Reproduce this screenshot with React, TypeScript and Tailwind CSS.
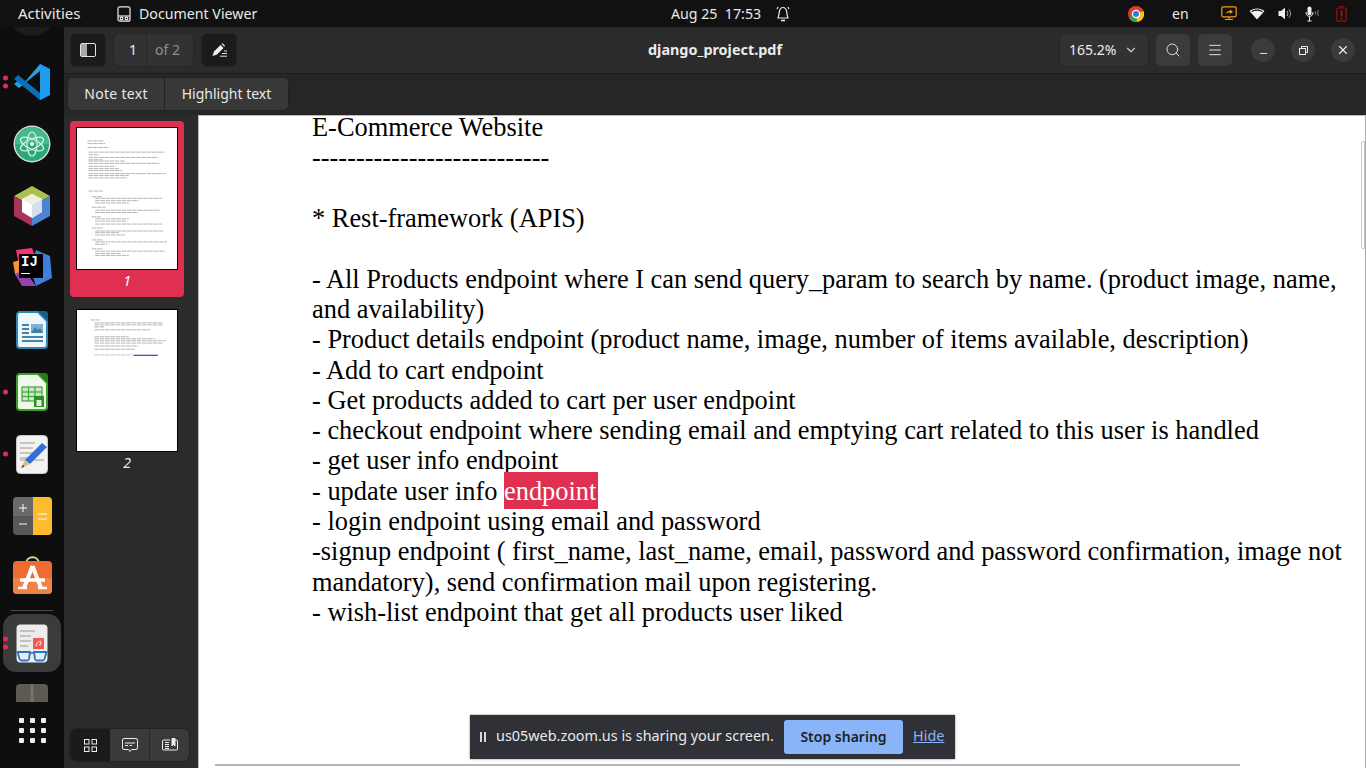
import { ChevronDown, Menu, Minus, Search, X } from "lucide-react";
import type { ReactNode } from "react";

const UI_FONT = "font-['Noto_Sans',sans-serif]";

// [y, x1, x2] in zoomed thumbnail coordinates
const PAGE_ONE: number[][] = [
  [70, 65, 115], [78, 65, 118], [90, 65, 130], [104, 68, 298], [112, 68, 100], [120, 68, 278],
  [127, 68, 110], [131, 68, 180], [138, 68, 282], [147, 68, 150], [154, 68, 160], [160, 68, 170],
  [169, 68, 302], [175, 68, 190], [182, 68, 185], [222, 68, 112], [239, 78, 108], [244, 88, 290],
  [251, 88, 220], [258, 88, 190], [271, 78, 120], [280, 88, 285], [287, 88, 218], [300, 78, 105],
  [306, 88, 190], [313, 88, 185], [322, 88, 290], [334, 78, 112], [343, 88, 295], [348, 88, 160],
  [355, 88, 178], [370, 78, 112], [376, 88, 305], [383, 88, 125], [397, 78, 112], [404, 88, 300],
  [411, 88, 165], [417, 88, 190],
];

const PAGE_TWO: number[][] = [
  [61, 75, 102], [70, 86, 292], [76, 86, 292], [82, 86, 115], [91, 86, 255], [112, 86, 190],
  [118, 86, 268], [124, 86, 302], [131, 86, 292], [140, 86, 218], [150, 86, 208],
];

function Thumb({ lines, link }: { lines: number[][]; link?: boolean }) {
  return (
    <div className="h-[143px] w-[102px] border border-black bg-white">
      <svg viewBox="33 33 303 423" className="h-full w-full">
        {lines.map(([y, a, b]) => (
          <line key={y} x1={a} x2={b} y1={y} y2={y} stroke="#b4b4b4" strokeWidth="3" strokeDasharray="14 2" />
        ))}
        {link && <line x1="86" x2="204" y1="167" y2="167" stroke="#c4c4c4" strokeWidth="3" strokeDasharray="14 2" />}
        {link && <line x1="205" x2="278" y1="168" y2="168" stroke="#1b1b8f" strokeWidth="3" />}
      </svg>
    </div>
  );
}

function DockItem({ children, dots = 0, active = false }: { children: ReactNode; dots?: number; active?: boolean }) {
  return (
    <div className="relative flex h-[62px] w-full items-center justify-center">
      {active && <div className="absolute left-[3px] top-0 h-[58px] w-[58px] translate-y-[2px] rounded-[13px] bg-[#3b3b3b]" />}
      {dots > 0 && (
        <div className="absolute left-[3px] top-1/2 flex -translate-y-1/2 flex-col gap-[3px]">
          {Array.from({ length: dots }).map((_, i) => (
            <span key={i} className="h-[5px] w-[5px] rounded-full bg-[#df3052]" />
          ))}
        </div>
      )}
      <div className="relative flex">{children}</div>
    </div>
  );
}

function VsCode() {
  return (
    <svg width="38" height="38" viewBox="0 0 38 38">
      <path d="M27 1 L37 6 V32 L27 37 L10 21 L27 30 V8 Z" fill="#0f7fc8" />
      <path d="M27 1 L37 6 V32 L27 37 Z" fill="#1f9cf0" />
      <path d="M27 8 L6 25 L1 21 L6 17 L11 20 L27 1 Z" fill="#2a9fe6" />
      <path d="M1 16 L5 12 L27 30 V37 Z" fill="#0a6fb5" />
    </svg>
  );
}

function Atom() {
  return (
    <svg width="38" height="38" viewBox="0 0 38 38">
      <circle cx="19" cy="19" r="18.5" fill="#d5ddd8" />
      <circle cx="19" cy="19" r="17" fill="#2aa876" />
      <path d="M2 19 A17 17 0 0 1 36 19 Z" fill="#45b88c" />
      <g fill="none" stroke="#d9f2e6" strokeWidth="1.2">
        <ellipse cx="19" cy="19" rx="12.5" ry="5" transform="rotate(25 19 19)" />
        <ellipse cx="19" cy="19" rx="12.5" ry="5" transform="rotate(-25 19 19)" />
        <ellipse cx="19" cy="19" rx="5" ry="12" />
      </g>
      <circle cx="19" cy="19" r="2" fill="#e5f7ee" />
    </svg>
  );
}

function NetBeans() {
  return (
    <svg width="38" height="42" viewBox="0 0 38 42">
      <path d="M19 1 L37 11 L19 21 L1 11 Z" fill="#a9c24f" />
      <path d="M1 11 L19 21 V41 L1 31 Z" fill="#a7345a" />
      <path d="M37 11 L19 21 V41 L37 31 Z" fill="#4a84d2" />
      <path d="M19 9 L29 14 V27 L19 33 L9 27 V14 Z" fill="#ffffff" />
      <path d="M19 9 L29 14 L19 20 L9 14 Z" fill="#eef1e0" />
      <path d="M29 14 V27 L19 33 V20 Z" fill="#d5dfeb" />
    </svg>
  );
}

function IntelliJ() {
  return (
    <div className="relative h-[40px] w-[40px]">
      <svg width="40" height="40" viewBox="0 0 40 40" className="absolute left-0 top-0">
        <path d="M4 2 L20 0 L24 10 L8 22 Z" fill="#f5336f" />
        <path d="M24 2 L38 8 L40 30 L24 38 L18 20 Z" fill="#3d7fd9" />
        <path d="M1 14 L8 12 L9 30 L3 26 Z" fill="#f59331" />
        <path d="M3 26 L10 38 L24 38 L12 22 Z" fill="#9243ac" />
      </svg>
      <div className="absolute left-[7px] top-[6px] flex h-[24px] w-[24px] flex-col bg-black pl-[2px]">
        <span className="font-['Liberation_Mono',monospace] text-[14px] font-bold leading-[16px] text-white">IJ</span>
        <span className="mt-[3px] h-[1px] w-[9px] bg-white" />
      </div>
    </div>
  );
}

function Writer() {
  return (
    <svg width="32" height="38" viewBox="0 0 32 38">
      <path d="M3 1 H22 L31 10 V34 A3 3 0 0 1 28 37 H4 A3 3 0 0 1 1 34 V3 Z" fill="#eef7fb" stroke="#2d86b8" strokeWidth="2" />
      <path d="M22 0 H29 A3 3 0 0 1 32 3 V10 Z" fill="#185f86" />
      <g stroke="#24658f" strokeWidth="1.6">
        <line x1="6" x2="13" y1="14" y2="14" />
        <line x1="6" x2="13" y1="18" y2="18" />
        <line x1="6" x2="13" y1="22" y2="22" />
        <line x1="6" x2="27" y1="26" y2="26" />
        <line x1="6" x2="27" y1="30" y2="30" />
      </g>
      <rect x="15" y="13" width="12" height="9" fill="#7fb2d4" />
      <path d="M15 22 L19 16 L22 19 L24 17 L27 22 Z" fill="#3f7ea8" />
    </svg>
  );
}

function CalcDoc() {
  return (
    <svg width="32" height="38" viewBox="0 0 32 38">
      <path d="M3 1 H22 L31 10 V34 A3 3 0 0 1 28 37 H4 A3 3 0 0 1 1 34 V3 Z" fill="#f1f8ec" stroke="#3aa02a" strokeWidth="2" />
      <path d="M22 0 H29 A3 3 0 0 1 32 3 V10 Z" fill="#257a1a" />
      <g stroke="#43a53a" strokeWidth="1.2" fill="#cfe9c7">
        <rect x="6" y="14" width="20" height="14" />
        <line x1="6" x2="26" y1="19" y2="19" />
        <line x1="6" x2="26" y1="23.5" y2="23.5" />
        <line x1="12.5" x2="12.5" y1="14" y2="28" />
        <line x1="19" x2="19" y1="14" y2="28" />
      </g>
      <rect x="18" y="23" width="10" height="11" fill="#2f8f25" />
      <rect x="20.5" y="27" width="5" height="6" fill="#dff0d8" />
    </svg>
  );
}

function TextEditor() {
  return (
    <svg width="32" height="39" viewBox="0 0 32 39">
      <rect x="0.5" y="0.5" width="31" height="38" rx="4" fill="#f2f2f2" stroke="#c9c9c9" />
      <g stroke="#bdbab0" strokeWidth="1.6">
        <line x1="4" x2="19" y1="8" y2="8" />
        <line x1="4" x2="17" y1="13" y2="13" />
        <line x1="4" x2="17" y1="18" y2="18" />
        <line x1="4" x2="13" y1="23" y2="23" />
        <line x1="4" x2="28" y1="25" y2="25" />
      </g>
      <path d="M26 8 L31 12 L14 29 L9 25 Z" fill="#2f6fd6" />
      <path d="M9 25 L14 29 L5 33 Z" fill="#e9b77d" />
      <path d="M7 30 L8.5 31.5 L5 33 Z" fill="#333" />
    </svg>
  );
}

function Calculator() {
  return (
    <svg width="39" height="38" viewBox="0 0 39 38">
      <path d="M4 0 H20 V19 H0 V4 A4 4 0 0 1 4 0 Z" fill="#6a6a6a" />
      <path d="M0 19 H20 V38 H4 A4 4 0 0 1 0 34 Z" fill="#585858" />
      <path d="M20 0 H35 A4 4 0 0 1 39 4 V34 A4 4 0 0 1 35 38 H20 Z" fill="#fdbb2d" />
      <g stroke="#f0f0f0" strokeWidth="1.1">
        <line x1="6" x2="14" y1="11" y2="11" />
        <line x1="10" x2="10" y1="7" y2="15" />
        <line x1="6" x2="14" y1="27" y2="27" />
      </g>
      <g stroke="#fff2c9" strokeWidth="1.3">
        <line x1="25" x2="34" y1="17" y2="17" />
        <line x1="25" x2="34" y1="22" y2="22" />
      </g>
    </svg>
  );
}

function AppStore() {
  return (
    <svg width="39" height="38" viewBox="0 0 39 38" className="-translate-y-[3px]">
      <path d="M13 8 C13 -1 26 -1 26 8" fill="none" stroke="#e9cf9e" strokeWidth="2" />
      <rect x="0" y="5" width="39" height="33" rx="4" fill="#ee6c31" />
      <path d="M0 22 H39 V34 A4 4 0 0 1 35 38 H4 A4 4 0 0 1 0 34 Z" fill="#f28145" />
      <path d="M19.5 10 L11 32 M19.5 10 L28 32" stroke="#fff" strokeWidth="4" />
      <path d="M7 24 H32" stroke="#fff" strokeWidth="3.5" />
      <path d="M5 32 H14 M25 32 H34" stroke="#fff" strokeWidth="2.5" />
    </svg>
  );
}

function DocViewer() {
  return (
    <svg width="32" height="39" viewBox="0 0 32 39">
      <rect x="0.5" y="0.5" width="31" height="38" rx="4" fill="#ececec" />
      <g stroke="#b7b5a8" strokeWidth="1.5">
        <line x1="4" x2="19" y1="7" y2="7" />
        <line x1="4" x2="15" y1="12" y2="12" />
        <line x1="4" x2="15" y1="17" y2="17" />
        <line x1="4" x2="12" y1="22" y2="22" />
      </g>
      <rect x="17" y="14" width="11" height="11" fill="#ee5a4e" />
      <path d="M20 22 C21 17 26 16 25 19 C24 22 22 20 25 21" fill="none" stroke="#fff" strokeWidth="1" />
      <path d="M1.5 28 H14 L13 35 Q12.5 36.5 11 36.5 H5.5 Q4 36.5 3.5 35 Z" fill="#e6edf5" stroke="#2f73c9" strokeWidth="1.8" />
      <path d="M18 28 H30.5 L28.5 35 Q28 36.5 26.5 36.5 H21 Q19.5 36.5 19 35 Z" fill="#e6edf5" stroke="#2f73c9" strokeWidth="1.8" />
      <path d="M14 29 H18" stroke="#2f73c9" strokeWidth="1.6" />
    </svg>
  );
}

function Dock() {
  return (
    <div className="flex h-full w-[64px] shrink-0 flex-col bg-[#0e0e0e]">
      <div className="min-h-0 flex-1 overflow-hidden">
        <div className="flex h-[24px] items-start justify-center">
          <svg width="38" height="13" viewBox="0 0 38 13">
            <path d="M1 0 A19 13 0 0 0 37 0 Z" fill="#1d1b1b" />
          </svg>
        </div>
        <DockItem dots={2}><VsCode /></DockItem>
        <DockItem><Atom /></DockItem>
        <DockItem><NetBeans /></DockItem>
        <DockItem><IntelliJ /></DockItem>
        <DockItem><Writer /></DockItem>
        <DockItem dots={1}><CalcDoc /></DockItem>
        <DockItem dots={1}><TextEditor /></DockItem>
        <DockItem><Calculator /></DockItem>
        <DockItem><AppStore /></DockItem>
        <div className="mx-[11px] mb-[1px] mt-[1px] h-[1px] bg-[#4a4a4a]" />
        <DockItem dots={2} active><DocViewer /></DockItem>
        <div className="flex justify-center pt-[10px]">
          <div className="relative h-[40px] w-[32px] rounded-[4px] bg-[#5c5a52]">
            <span className="absolute left-1/2 top-0 h-[40px] w-[3px] -translate-x-1/2 bg-[#77746b]" />
          </div>
        </div>
      </div>
      <div className="flex h-[66px] shrink-0 items-start justify-center pt-[16px]">
        <div className="grid grid-cols-3 gap-x-[6px] gap-y-[5px]">
          {Array.from({ length: 9 }).map((_, i) => (
            <span key={i} className="h-[5px] w-[5px] rounded-[1px] bg-[#ececec]" />
          ))}
        </div>
      </div>
    </div>
  );
}

function TopBar() {
  return (
    <div className={`flex h-[27px] shrink-0 items-center bg-[#111111] text-[14.2px] text-[#e9e9e9] ${UI_FONT}`}>
      <span className="ml-[18px] w-[99px] text-[15px]">Activities</span>
      <svg width="14" height="16" viewBox="0 0 14 16" fill="none" stroke="#e9e9e9" strokeWidth="1.2">
        <rect x="1" y="0.8" width="12" height="14.4" rx="2" />
        <path d="M1 10 H13" />
        <circle cx="4.5" cy="12.5" r="1.4" />
        <circle cx="9.5" cy="12.5" r="1.4" />
      </svg>
      <span className="ml-[8px] w-[532px]">Document Viewer</span>
      <span className="w-[105px]">Aug 25&nbsp;&nbsp;17:53</span>
      <svg width="14" height="16" viewBox="0 0 14 16" fill="none" stroke="#e9e9e9" strokeWidth="1.2">
        <path d="M2 12 C3 9 3 7 3.5 5 C4 2.5 5.5 1.5 7 1.5 C8.5 1.5 10 2.5 10.5 5 C11 7 11 9 12 12 Z" />
        <path d="M1 3 L2 1 M13 3 L12 1" />
        <path d="M5 14.5 H9" strokeWidth="1.6" />
      </svg>
      <div className="flex-1" />
      <svg width="16" height="16" viewBox="0 0 16 16" className="mr-[28px]">
        <circle cx="8" cy="8" r="8" fill="#e33b2e" />
        <path d="M8 8 L1 12 A8 8 0 0 0 9 16 Z" fill="#2ea44f" />
        <path d="M8 8 L15.5 5 A8 8 0 0 1 9 16 Z" fill="#f9c31a" />
        <circle cx="8" cy="8" r="3.6" fill="#2a7de1" stroke="#fff" strokeWidth="1.2" />
      </svg>
      <span className="mr-[33px] w-[16px] text-[14px]">en</span>
      <svg width="16" height="15" viewBox="0 0 16 15" fill="none" className="mr-[12px]">
        <rect x="0.8" y="0.8" width="14.4" height="10" rx="1.5" stroke="#f39c12" strokeWidth="1.2" />
        <path d="M4 13.5 H12 M8 11 V13.5" stroke="#f39c12" strokeWidth="1.2" />
        <path d="M5 8 C5.5 5.5 7 5 9 5 V3.5 L12 5.8 L9 8 V6.6 C7.5 6.6 6 7 5 8 Z" fill="#f39c12" />
      </svg>
      <svg width="16" height="13" viewBox="0 0 16 13" className="mr-[13px]">
        <path d="M8 12.5 L0.5 4 C4.5 0.5 11.5 0.5 15.5 4 Z" fill="#f2f2f2" />
        <path d="M2.2 4.2 C5.5 2 10.5 2 13.8 4.2 L13 5 C10 3.2 6 3.2 3 5 Z" fill="#111111" />
      </svg>
      <svg width="15" height="13" viewBox="0 0 15 13" className="mr-[12px]" fill="none">
        <path d="M0.5 4 H3 L7 0.8 V12.2 L3 9 H0.5 Z" fill="#f0f0f0" />
        <path d="M9 4 C10 5.5 10 7.5 9 9 M11 2.5 C13 5 13 8 11 10.5" stroke="#bdbdbd" strokeWidth="1" />
      </svg>
      <svg width="16" height="16" viewBox="0 0 16 16" className="mr-[15px]" fill="none">
        <rect x="2.5" y="0.5" width="4" height="9" rx="2" fill="#f0f0f0" />
        <path d="M1 6 C1 12 8 12 8 6 M4.5 11 V15 M2.5 15 H6.5" stroke="#f0f0f0" strokeWidth="1" />
        <path d="M11 5 C10 6.5 10 8 11 9 M13.5 4 C12.5 6 12.5 8 13.5 10" stroke="#8a8a8a" strokeWidth="0.9" />
      </svg>
      <svg width="11" height="16" viewBox="0 0 11 16" className="mr-[19px]" fill="none">
        <rect x="0.8" y="2" width="9.4" height="13.2" rx="1.2" stroke="#a10f0f" strokeWidth="1.2" />
        <path d="M3.5 0.6 H7.5" stroke="#a10f0f" strokeWidth="1.2" />
        <path d="M5.5 4.5 V10.5 M5.5 11.8 V13.5" stroke="#c01212" strokeWidth="1.6" />
      </svg>
    </div>
  );
}

function HeaderBar() {
  return (
    <div className={`flex h-[47px] shrink-0 items-center border-b border-[#1d1d1d] bg-[#2b2b2b] pl-[6px] text-[#ececec] ${UI_FONT}`}>
      <button className="flex h-[34px] w-[36px] items-center justify-center rounded-[6px] border border-[#222222] bg-[#1b1b1b]">
        <svg width="16" height="14" viewBox="0 0 16 14">
          <rect x="0.5" y="0.5" width="15" height="13" rx="1.5" fill="none" stroke="#e4e4e4" />
          <rect x="1" y="1" width="6" height="12" fill="#a8a8a8" />
        </svg>
      </button>
      <div className="ml-[7px] flex h-[34px] w-[81px] items-center rounded-[6px] border border-[#262626] bg-[#323232] pb-[1px] text-[14px]">
        <span className="w-[32px] pr-[9px] text-right">1</span>
        <span className="h-[33px] w-[1px] bg-[#262626]" />
        <span className="pl-[8px] text-[#8e8e8e]">of 2</span>
      </div>
      <button className="ml-[7px] flex h-[34px] w-[36px] items-center justify-center rounded-[6px] border border-[#222222] bg-[#1b1b1b]">
        <svg width="15" height="14" viewBox="0 0 15 14">
          <path d="M0.5 13 L2 8.5 L8.5 2 L11.5 5 L5 11.5 Z" fill="#f0f0f0" />
          <path d="M9.5 1 L10.5 0.2 L13 2.8 L12.3 3.8 Z" fill="#f0f0f0" />
          <path d="M8 13.2 H15 M10 10.5 H15 M12 8 H15" stroke="#e0e0e0" strokeWidth="1" />
        </svg>
      </button>
      <div className="flex-1 pl-[134px] text-center text-[14.4px] font-bold">django_project.pdf</div>
      <div className="flex h-[34px] w-[90px] items-center rounded-[6px] border border-[#262626] bg-[#323232] pb-[1px] pl-[9px] text-[14px]">
        <span>165.2%</span>
        <ChevronDown size={14} className="ml-[8px] text-[#c9c9c9]" />
      </div>
      <button className="ml-[6px] flex h-[34px] w-[36px] items-center justify-center rounded-[6px] border border-[#2a2a2a] bg-[#3b3b3b]">
        <Search size={16} strokeWidth={1.4} />
      </button>
      <button className="ml-[6px] flex h-[34px] w-[36px] items-center justify-center rounded-[6px] border border-[#2a2a2a] bg-[#3b3b3b]">
        <Menu size={16} strokeWidth={1.4} />
      </button>
      <button className="ml-[18px] flex h-[24px] w-[24px] items-center justify-center rounded-full bg-[#3b3b3b]">
        <Minus size={11} className="mt-[6px]" />
      </button>
      <button className="ml-[16px] flex h-[24px] w-[24px] items-center justify-center rounded-full bg-[#3b3b3b]">
        <svg width="9" height="9" viewBox="0 0 9 9" fill="none" stroke="#ececec">
          <rect x="0.5" y="2.5" width="6" height="6" />
          <path d="M2.5 2.5 V0.5 H8.5 V6.5 H6.5" />
        </svg>
      </button>
      <button className="ml-[16px] mr-[11px] flex h-[24px] w-[24px] items-center justify-center rounded-full bg-[#3b3b3b]">
        <X size={14} strokeWidth={2} />
      </button>
    </div>
  );
}

function ActionsBar() {
  return (
    <div className={`flex h-[41px] shrink-0 items-start bg-[#262626] pl-[3px] pt-[3px] text-[14px] text-[#e8e8e8] ${UI_FONT}`}>
      <div className="flex h-[34px] w-[222px] rounded-[6px] border border-[#222222] bg-[#383838]">
        <span className="flex w-[97px] items-center justify-center border-r border-[#222222] pb-[1px] tracking-[0.3px]">Note text</span>
        <span className="flex flex-1 items-center justify-center pb-[1px]">Highlight text</span>
      </div>
    </div>
  );
}

function Sidebar() {
  return (
    <div className={`flex w-[134px] shrink-0 flex-col bg-[#2b2b2b] pl-[6px] pt-[6px] ${UI_FONT}`}>
      <div className="flex h-[176px] w-[114px] flex-col items-center rounded-[4px] bg-[#df3052] pt-[6px]">
        <Thumb lines={PAGE_ONE} />
        <span className="mt-[1px] text-[14px] italic leading-[20px] text-white">1</span>
      </div>
      <div className="mt-[12px] flex w-[114px] flex-col items-center">
        <Thumb lines={PAGE_TWO} link />
        <span className="mt-[1px] text-[14px] italic leading-[20px] text-[#e8e8e8]">2</span>
      </div>
      <div className="flex-1" />
      <div className="mb-[6px] -ml-[1px] flex h-[34px] w-[121px] overflow-hidden rounded-[7px] border border-[#222222] bg-[#3a3a3a]">
        <div className="flex w-[40px] items-center justify-center bg-[#1b1b1b]">
          <svg width="13" height="13" viewBox="0 0 13 13" fill="none" stroke="#f0f0f0">
            <rect x="0.5" y="0.5" width="4.5" height="4.5" />
            <rect x="8" y="0.5" width="4.5" height="4.5" />
            <rect x="0.5" y="8" width="4.5" height="4.5" />
            <rect x="8" y="8" width="4.5" height="4.5" />
          </svg>
        </div>
        <div className="flex w-[40px] items-center justify-center border-r border-[#262626]">
          <svg width="16" height="15" viewBox="0 0 16 15" fill="none" stroke="#ececec">
            <path d="M2 0.5 H14 A1.5 1.5 0 0 1 15.5 2 V10 A1.5 1.5 0 0 1 14 11.5 H9.5 L8 13.5 L6.5 11.5 H2 A1.5 1.5 0 0 1 0.5 10 V2 A1.5 1.5 0 0 1 2 0.5 Z" />
            <path d="M3 5 H13 M3 7.5 H6 M7.5 7.5 H10" />
          </svg>
        </div>
        <div className="flex flex-1 items-center justify-center">
          <svg width="16" height="15" viewBox="0 0 16 15" fill="none" stroke="#ececec">
            <path d="M8 2 H1.5 A1 1 0 0 0 0.5 3 V11 A1 1 0 0 0 1.5 12 H14.5 A1 1 0 0 0 15.5 11 V3 A1 1 0 0 0 14.5 2 H13" />
            <path d="M3 4.5 H7 M3 6.5 H7 M3 8.5 H7 M3 10.5 H7" />
            <path d="M10 0.5 H13 V8 L11.5 6.5 L10 8 Z" fill="#ececec" />
          </svg>
        </div>
      </div>
    </div>
  );
}

function Pdf() {
  return (
    <div className="relative min-w-0 flex-1 overflow-hidden border-l border-t border-[#b9b9b9] bg-white">
      <div className="pl-[113px] pr-[18px] font-['Liberation_Serif',serif] text-[26.4px] leading-[30.32px] text-black">
        <div className="mb-[4px] whitespace-pre leading-[22.32px]">E-Commerce Website</div>
        <div className="whitespace-pre">---------------------------</div>
        <div className="h-[30.32px]" />
        <div className="whitespace-pre">* Rest-framework (APIS)</div>
        <div className="h-[30.32px]" />
        <div>- All Products endpoint where I can send query_param to search by name. (product image, name, and availability)</div>
        <div>- Product details endpoint (product name, image, number of items available, description)</div>
        <div>- Add to cart endpoint</div>
        <div>- Get products added to cart per user endpoint</div>
        <div>- checkout endpoint where sending email and emptying cart related to this user is handled</div>
        <div>- get user info endpoint</div>
        <div>
          - update user info <span className="bg-[#df3052] py-[3.5px] pr-[2px] text-white">endpoint</span>
        </div>
        <div>- login endpoint using email and password</div>
        <div>-signup endpoint ( first_name, last_name, email, password and password confirmation, image not mandatory), send confirmation mail upon registering.</div>
        <div>- wish-list endpoint that get all products user liked</div>
      </div>
      <div className="absolute bottom-0 right-0 top-0 w-[1px] bg-[#a9a9a9]" />
      <div className="absolute right-[1px] top-[25px] h-[108px] w-[4px] rounded-l-[2px] border border-[#c8c8c8] bg-white" />
      <div className="absolute bottom-[2px] left-[16px] h-[2px] w-[1025px] bg-[#b5b5b5]" />
      <div className={`absolute bottom-[9px] left-[271px] flex h-[44px] w-[485px] items-center bg-[#2f3136] pl-[10px] text-[14.4px] text-[#e8eaed] shadow-[0_0_2px_rgba(0,0,0,0.5)] ${UI_FONT}`}>
        <span className="flex gap-[2px]">
          <span className="h-[10px] w-[2px] bg-[#d8d8d8]" />
          <span className="h-[10px] w-[2px] bg-[#d8d8d8]" />
        </span>
        <span className="ml-[10px] w-[288px] whitespace-nowrap pb-[2px]">us05web.zoom.us is sharing your screen.</span>
        <span className="flex h-[34px] w-[119px] items-center justify-center rounded-[3px] bg-[#8ab4f8] pb-[2px] text-[14px] font-semibold text-[#202124]">Stop sharing</span>
        <span className="ml-[10px] pb-[2px] text-[#8ab4f8] underline">Hide</span>
      </div>
    </div>
  );
}

export default function App() {
  return (
    <div className="flex h-[768px] w-[1366px] flex-col overflow-hidden bg-[#111111]">
      <TopBar />
      <div className="flex min-h-0 flex-1">
        <Dock />
        <div className="flex min-w-0 flex-1 flex-col">
          <HeaderBar />
          <ActionsBar />
          <div className="flex min-h-0 flex-1">
            <Sidebar />
            <Pdf />
          </div>
        </div>
      </div>
    </div>
  );
}
